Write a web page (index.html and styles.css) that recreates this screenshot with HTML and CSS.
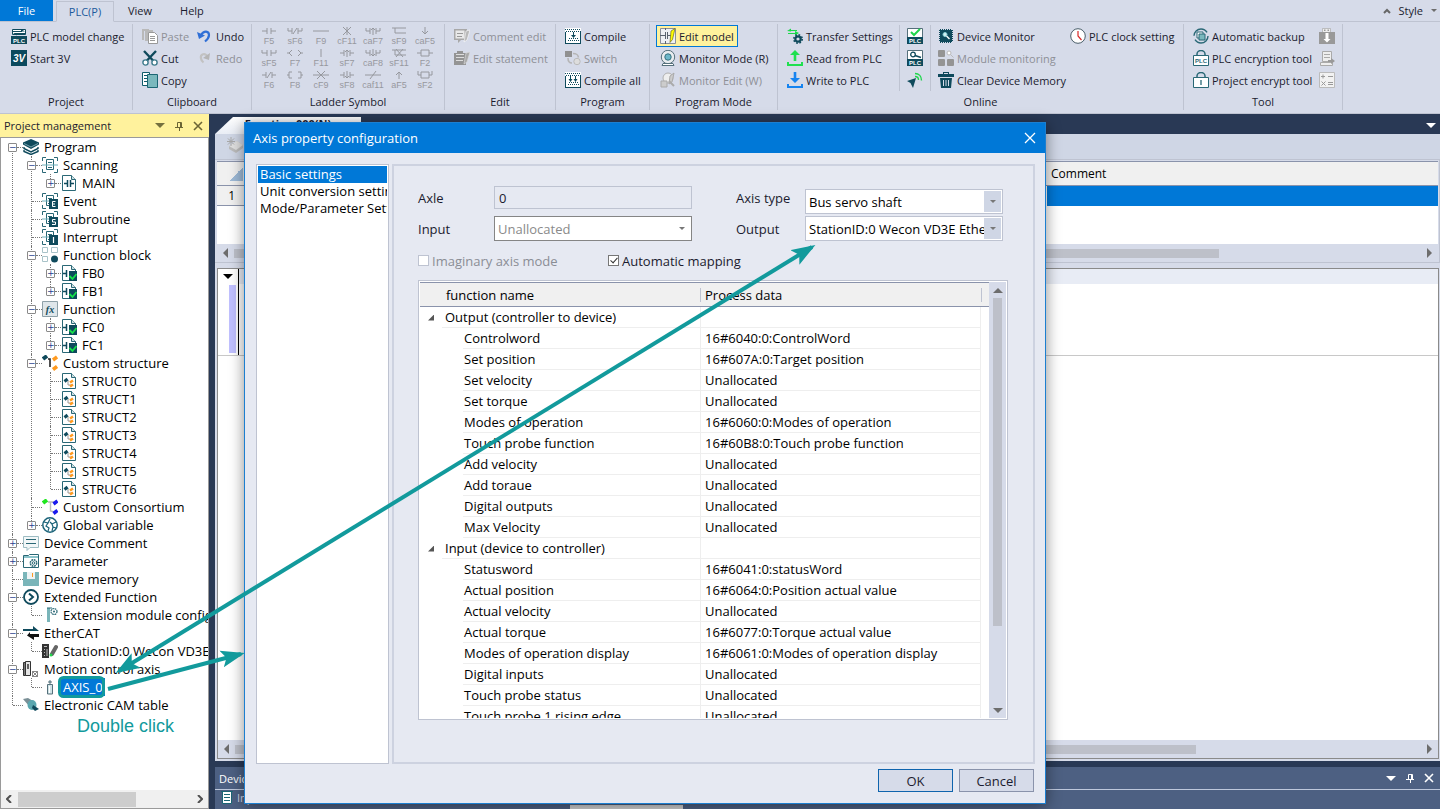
FILE: index.html
```html
<!DOCTYPE html>
<html lang="en">
<head>
    <meta charset="UTF-8">
    <meta name="viewport" content="width=device-width, initial-scale=1.0">
    <title>Axis property configuration</title>
    <link rel="stylesheet" href="styles.css">
</head>
<body>
    <svg class="sprite" aria-hidden="true">
        <!-- ribbon -->
        <symbol id="i-model" viewBox="0 0 16 16"><path fill="#fff" stroke="#0f4a5c" d="M1.500 1.500h13v5h-13z"/><path stroke="#0f4a5c" d="M1 3.500h10M5 5.500h10" /><path fill="#0f4a5c" d="M10 1l4 2.500h-4zM6 7.500L2 5h4zM0 8h16v8H0z"/><text x="8" y="14.500" class="svg-plc">PLC</text></symbol>
        <symbol id="i-3v" viewBox="0 0 16 16"><rect width="16" height="16" fill="#0b4a5e"/><text x="8" y="12" class="svg-3v">3V</text></symbol>
        <symbol id="i-paste" viewBox="0 0 16 16"><path fill="#b9b9b9" d="M0 1h7v2H2v9H0zM3 2h8v2H6v9H3z"/><path fill="#fff" stroke="#999" d="M6.500 4.500h6l3 3v8h-9z"/><path stroke="#999" d="M8 8.500h5M8 10.500h5M8 12.500h5"/></symbol>
        <symbol id="i-cut" viewBox="0 0 16 16"><path stroke="#0f4a5c" stroke-width="2.400" d="M2 1l9.500 10M14 1L4.500 11"/><g fill="#fff" stroke="#3e7b8c" stroke-width="1.400"><circle cx="3.500" cy="12.500" r="2.600"/><circle cx="12.500" cy="12.500" r="2.600"/></g></symbol>
        <symbol id="i-copy" viewBox="0 0 16 16"><path fill="#fff" stroke="#0f5c6b" d="M.5 .5h7v13h-7z"/><path stroke="#0f5c6b" d="M2 3.500h4M2 6.500h4M2 9.500h4"/><path fill="#7ab8bd" stroke="#1b6674" d="M5.500 2.500h10v13h-10z"/></symbol>
        <symbol id="i-undo" viewBox="0 0 16 16"><path fill="none" stroke="#2f6fd6" stroke-width="2.200" d="M4 7c3-5 8-4 8 0 0 2.500-1.500 4.500-4 6.500"/><path fill="#2f6fd6" d="M0 4l2 7 6-3.500z"/></symbol>
        <symbol id="i-redo" viewBox="0 0 16 16"><path fill="none" stroke="#c2c2c2" stroke-width="2.200" d="M11 7C8 2 3 4 4 8.500c.3 2 1.200 3 2.500 4"/><path fill="#b5b5b5" d="M13 3l-1 7-6-2z"/></symbol>
        <symbol id="i-comment" viewBox="0 0 16 16"><path fill="#a8a8a8" d="M0 1h13v11H7l-3 3v-3H0z"/><path fill="#e9e9e9" d="M1.500 2.500h9v8h-9z"/><path stroke="#999" d="M3 5.500h6M3 8.500h5"/><path fill="#b9b9b9" stroke="#fff" stroke-width=".6" d="M12 3l4-1-3 10-3 2z"/></symbol>
        <symbol id="i-statement" viewBox="0 0 16 16"><path fill="#949494" d="M0 3h3V1h6v2h3v12H0z"/><path stroke="#ddd" d="M2 7.500h8M2 10.500h7M2 4.500h8"/><path fill="#a9a9a9" stroke="#ddd" stroke-width=".6" d="M12 3l4-1-3 10-3 2z"/></symbol>
        <symbol id="i-compile" viewBox="0 0 16 16"><path fill="#fff" d="M0 0h16v16H0z"/><path stroke="#0f4a5c" stroke-dasharray="1 1" d="M0 1.500h16M1 3.500h15M3 12.500h11M4 10.500h9"/><path stroke="#0f4a5c" d="M.5 4v12M15.500 4v12M0 15.500h16M8.500 4v5"/><path fill="#0f4a5c" d="M6 7h5l-2.500 3z"/></symbol>
        <symbol id="i-compile-all" viewBox="0 0 16 16"><path fill="#fff" d="M0 0h16v16H0z"/><path stroke="#0f4a5c" stroke-dasharray="1 1" d="M0 1.500h16M1 3.500h15M3 12.500h11M4 10.500h9"/><path stroke="#0f4a5c" d="M.5 4v12M15.500 4v12M0 15.500h16M5.500 4v5M10.500 4v5"/><path fill="#0f4a5c" d="M3.500 7h4l-2 3zM8.500 7h4l-2 3z"/></symbol>
        <symbol id="i-switch" viewBox="0 0 16 16"><path fill="#909090" d="M0 1h7v6H0z"/><circle cx="12" cy="11.500" r="3.200" fill="#ddd" stroke="#bbb"/><path fill="none" stroke="#b5b5b5" stroke-width="1.600" d="M8 3.500c4 0 5 1 5.500 4M3 8c0 3 1 5 4 5"/></symbol>
        <symbol id="i-edit-model" viewBox="0 0 16 16"><path fill="#eef0f4" stroke="#8a8f99" d="M.5 .5h15v15H.5z"/><path stroke="#59636e" d="M0 7.500h5M8 7.500h4M5.500 4v7M7.500 4v7M5.500 0v2M5.500 13v3"/><path fill="#ff0" stroke="#6d6a20" stroke-width=".7" d="M11 3l4-2.500-2.500 11L10 14.500z"/></symbol>
        <symbol id="i-monitor" viewBox="0 0 16 16"><circle cx="8" cy="7" r="6.700" fill="#e8ecef" stroke="#55707b"/><circle cx="8" cy="7" r="3.200" fill="#6cb7c9" stroke="#36717f"/><path fill="#fff" stroke="#55707b" d="M3 13.500h10l1 2H2z"/></symbol>
        <symbol id="i-monitor-edit" viewBox="0 0 16 16"><circle cx="8" cy="6" r="5" fill="#eee" stroke="#b0b0b0"/><path fill="#ccc" stroke="#aaa" d="M1 9h6v6H1zM10 4l4-3-2 9-3 2z"/><path stroke="#aaa" stroke-width="2" d="M9 9l5 5"/></symbol>
        <symbol id="i-transfer" viewBox="0 0 16 16"><path fill="#1bd94b" d="M0 3l4-2.500V2h6v1H4v.5zM12 5l-4 2.500V6H1V5h7V3z"/><circle cx="11" cy="11" r="2.700" fill="none" stroke="#0f4a5c" stroke-width="2.200"/><circle cx="11" cy="11" r="4.200" fill="none" stroke="#0f4a5c" stroke-width="1.600" stroke-dasharray="1.700 1.600"/></symbol>
        <symbol id="i-read" viewBox="0 0 16 16"><path fill="#1fe04f" d="M8 0l5 5H9.300v6H6.700V5H3z"/><path fill="none" stroke="#1fe04f" stroke-width="2" d="M1 12v3h14v-3"/></symbol>
        <symbol id="i-write" viewBox="0 0 16 16"><path fill="#1583f0" d="M6.700 0h2.600v6H13l-5 5-5-5h3.700z"/><path fill="none" stroke="#1583f0" stroke-width="2" d="M1 12v3h14v-3"/></symbol>
        <symbol id="i-plc-check" viewBox="0 0 16 16"><path fill="#fff" stroke="#55707b" d="M.5 .5h15v15H.5z"/><path fill="#0f4a5c" d="M0 9h16v7H0z"/><path fill="none" stroke="#1fd64c" stroke-width="2" d="M4 4l3 3 6-6"/><text x="8" y="15" class="svg-plc">PLC</text></symbol>
        <symbol id="i-plc-key" viewBox="0 0 16 16"><path fill="#fff" stroke="#55707b" d="M.5 .5h15v15H.5z"/><path fill="#0f4a5c" d="M0 9h16v7H0z"/><circle cx="6" cy="4.500" r="2.300" fill="none" stroke="#0f4a5c" stroke-width="1.300"/><path stroke="#0f4a5c" stroke-width="1.400" d="M8 5.500l6 2"/><text x="8" y="15" class="svg-plc">PLC</text></symbol>
        <symbol id="i-signal" viewBox="0 0 16 16"><path fill="#0f4a5c" d="M0 9l9-3-3 10-2.500-5z"/><path fill="none" stroke="#1fd64c" stroke-width="1.400" d="M8 4.500c2 0 3.500 1.500 3.500 3.500M8 1.500c4 0 6.500 3 6.500 7"/></symbol>
        <symbol id="i-chip" viewBox="0 0 16 16"><path stroke="#0f4a5c" stroke-width="14" stroke-dasharray="1 1" d="M2 8h12"/><path stroke="#0f4a5c" stroke-width="14" stroke-dasharray="1 1" d="M8 2v12"/><path fill="#0f4a5c" d="M2 2h12v12H2z"/><circle cx="7" cy="6.500" r="2" fill="#d6f0f2" stroke="#8ad0d6"/><path stroke="#fff" stroke-width="1.400" d="M8.500 8l3 3"/></symbol>
        <symbol id="i-module" viewBox="0 0 16 16"><g fill="#949494"><rect width="7" height="7" rx="1"/><rect y="9" width="7" height="7" rx="1"/><rect x="9" y="9" width="7" height="7" rx="1"/></g><circle cx="11" cy="3" r="2" fill="#fff" stroke="#b8b8b8"/><path stroke="#bbb" d="M12.500 4.500l3 3"/></symbol>
        <symbol id="i-trash" viewBox="0 0 16 16"><path fill="#0f4a5c" d="M5 0h6v2h5v3H0V2h5zM2 6h12l-1 10H3z"/><path stroke="#d6dbe9" d="M5.500 8v6M8 8v6M10.500 8v6M6 1.500h4"/></symbol>
        <symbol id="i-clock" viewBox="0 0 16 16"><circle cx="8" cy="8" r="7.300" fill="#fff" stroke="#4a5e6a"/><path stroke="#d92a2a" stroke-width="1.200" d="M8 3v5l3.500 4"/></symbol>
        <symbol id="i-backup" viewBox="0 0 16 16"><circle cx="8" cy="8" r="7" fill="none" stroke="#2a6876" stroke-width="1.400" stroke-dasharray="18 4"/><path fill="#fff" stroke="#2a6876" d="M4 4h6v6H4z"/><path fill="#7ab8bd" stroke="#2a6876" d="M6 6h6v6H6z"/></symbol>
        <symbol id="i-lock-plc" viewBox="0 0 16 16"><path fill="none" stroke="#2a6876" stroke-width="1.500" d="M4 6V4a4 3.500 0 0 1 8 0v2"/><path fill="#fff" stroke="#2a6876" d="M.5 5.500h15v10H.5z"/><text x="8" y="13" class="svg-plc svg-plc-dark">PLC</text></symbol>
        <symbol id="i-lock" viewBox="0 0 16 16"><path fill="none" stroke="#2a6876" stroke-width="1.500" d="M4 6V4a4 3.500 0 0 1 8 0v2"/><path fill="#fff" stroke="#2a6876" d="M.5 5.500h15v10H.5z"/><path stroke="#2a6876" stroke-width="1.300" d="M8 8v5"/></symbol>
        <symbol id="i-usb" viewBox="0 0 16 16"><path fill="#eee" stroke="#aaa" stroke-width=".7" d="M3.500 .5h8v4h-8z"/><path fill="#999" d="M5 1.500h1.500V3H5zM8.500 1.500H10V3H8.500zM0 4h16v12H0z"/><path fill="#fff" d="M6.500 5h3v6h2L8 14.500 4.500 11h2z"/></symbol>
        <symbol id="i-export" viewBox="0 0 16 16"><path fill="#eee" stroke="#aaa" d="M3.500 1.500h9v10h-9zM1.500 12.500h12v3h-12z"/><path stroke="#aaa" d="M5 4.500h6M5 7.500h6"/><path fill="#999" d="M9 10h3V8l4 3-4 3v-2H9z"/></symbol>
        <symbol id="i-calc" viewBox="0 0 16 16"><path fill="#f2f2f2" stroke="#bbb" d="M.5 .5h15v15H.5z"/><path stroke="#999" d="M2 4.500h4M4 2.500v4M9 4.500h5M2.500 9.500l4 4M6.500 9.500l-4 4M9 10.500h5M9 12.500h5"/></symbol>

        <!-- ladder contacts -->
        <symbol id="l-no" viewBox="0 0 16 8"><path d="M1 4h5M10 4h5M6 1v6M10 1v6"/></symbol>
        <symbol id="l-or" viewBox="0 0 16 8"><path d="M1 1v3h5M10 4h5V1M6 1v6M10 1v6"/></symbol>
        <symbol id="l-nc" viewBox="0 0 16 8"><path d="M1 4h4M11 4h4M5 1v6M11 1v6M6 7l4-6"/></symbol>
        <symbol id="l-ornc" viewBox="0 0 16 8"><path d="M1 1v3h4M11 4h4V1M5 1v6M11 1v6M6 7l4-6"/></symbol>
        <symbol id="l-line" viewBox="0 0 16 8"><path d="M0 4h16"/></symbol>
        <symbol id="l-x" viewBox="0 0 16 8"><path d="M8 0v8M4 0l8 8M12 0L4 8"/></symbol>
        <symbol id="l-xline" viewBox="0 0 16 8"><path d="M0 4h16M4 0l8 8M12 0L4 8"/></symbol>
        <symbol id="l-up" viewBox="0 0 16 8"><path d="M1 4h4M11 4h4M5 1v6M11 1v6M8 1v7M6 3l2-2 2 2"/></symbol>
        <symbol id="l-down" viewBox="0 0 16 8"><path d="M1 4h4M11 4h4M5 1v6M11 1v6M8 0v7M6 5l2 2 2-2"/></symbol>
        <symbol id="l-orup" viewBox="0 0 16 8"><path d="M1 1v3h4M11 4h4V1M5 1v6M11 1v6M8 1v7M6 3l2-2 2 2"/></symbol>
        <symbol id="l-ordown" viewBox="0 0 16 8"><path d="M1 1v3h4M11 4h4V1M5 1v6M11 1v6M8 0v7M6 5l2 2 2-2"/></symbol>
        <symbol id="l-branch" viewBox="0 0 16 8"><path d="M1 1h14M4 1v5h11"/></symbol>
        <symbol id="l-xbranch" viewBox="0 0 16 8"><path d="M1 1h14M4 1v5h11M5 0l7 8M12 0L5 8"/></symbol>
        <symbol id="l-arrd" viewBox="0 0 16 8"><path d="M8 0v7M5 4l3 3 3-3"/></symbol>
        <symbol id="l-arru" viewBox="0 0 16 8"><path d="M8 1v7M5 4l3-3 3 3"/></symbol>
        <symbol id="l-coil" viewBox="0 0 16 8"><path d="M0 4h2M5 1L2 4l3 3M11 1l3 3-3 3M14 4h2"/></symbol>
        <symbol id="l-app" viewBox="0 0 16 8"><path d="M0 4h2M5 1H2v6h3M11 1h3v6h-3M14 4h2"/></symbol>
        <symbol id="l-vert" viewBox="0 0 16 8"><path d="M8 0v8"/></symbol>
        <symbol id="l-slash" viewBox="0 0 16 8"><path d="M0 4h16M5 8l6-8"/></symbol>
        <symbol id="l-box" viewBox="0 0 16 8"><path d="M0 4h4V1h8v6H4V4M12 4h4"/></symbol>
        <symbol id="l-orbox" viewBox="0 0 16 8"><path d="M1 0v4h3V1h8v6H4V4M12 4h3V0"/></symbol>

        <!-- project tree -->
        <symbol id="t-program" viewBox="0 0 16 16"><path fill="#fff" stroke="#0f4a5c" stroke-width="1.400" d="M1 11v1.500l7 3 7-3V11M1 8v1.500l7 3.500 7-3.500V8"/><path fill="#0f4a5c" d="M8 0l8 3.500v2L8 10 0 5.500v-2z"/><path fill="none" stroke="#8fb9c2" stroke-width=".8" d="M1 4.500l7 3.500 7-3.500"/></symbol>
        <symbol id="t-scan" viewBox="0 0 16 16"><path fill="none" stroke="#2a6876" d="M.5 4V.5H4M12 .5h3.500V4M.5 12v3.500H4M12 15.500h3.500V12M4.500 2.500h7v10h-7zM6 5.500h4M6 10.500h4"/><path stroke="#6fb0bb" d="M0 8h16"/></symbol>
        <symbol id="t-scan-e" viewBox="0 0 16 16"><use href="#t-scan"/><path fill="#0f4a5c" d="M7 6h9v10H7z"/><path fill="none" stroke="#fff" d="M13.500 8.500h-3v5h3M10 11h3"/></symbol>
        <symbol id="t-scan-s" viewBox="0 0 16 16"><use href="#t-scan"/><path fill="#0f4a5c" d="M7 6h9v10H7z"/><path fill="none" stroke="#fff" d="M13.500 8.500h-3V11h3v2.500h-3.500"/></symbol>
        <symbol id="t-scan-i" viewBox="0 0 16 16"><use href="#t-scan"/><path fill="#0f4a5c" d="M7 6h9v10H7z"/><path stroke="#fff" stroke-width="1.200" d="M11.500 8v6"/></symbol>
        <symbol id="t-page" viewBox="0 0 16 16"><path fill="#fff" stroke="#2a6876" d="M1.500 .5h9l4 4v11h-13z"/><path fill="#cfdfe3" stroke="#2a6876" d="M10.500 .5v4h4"/></symbol>
        <symbol id="t-main" viewBox="0 0 16 16"><use href="#t-page"/><path stroke="#0f4a5c" stroke-width="1.500" d="M3 8.500h3M10 8.500h3M6.500 5v7M9.500 5v7"/></symbol>
        <symbol id="t-fb" viewBox="0 0 16 16"><use href="#t-page"/><path stroke="#0f4a5c" stroke-width="1.500" d="M2 8.500h3M5.500 5v7"/><path fill="#0f4a5c" d="M8 6h8v10H8z"/><path fill="none" stroke="#16e04a" stroke-width="1.800" d="M8.500 11l3 3 4-5"/></symbol>
        <symbol id="t-blocks" viewBox="0 0 16 16"><path fill="#fff" stroke="#a9c3c9" d="M.5 .5h5v5h-5zM9.500 .5h6v5h-6zM.5 9.500h5v5h-5z"/><circle cx="12.500" cy="12" r="3.500" fill="#0f4a5c"/></symbol>
        <symbol id="t-fx" viewBox="0 0 16 16"><path fill="#dfe6ea" stroke="#8ea0a8" d="M.5 .5h15v15H.5z"/><text x="8" y="11.500" class="svg-fx">fx</text></symbol>
        <symbol id="t-struct" viewBox="0 0 16 16"><path fill="none" stroke="#222" stroke-width="1.600" d="M6 4h2v8"/><path stroke="#0f4a5c" stroke-width="4" d="M1 4l4-3"/><path stroke="#ff9a1f" stroke-width="3.500" d="M11 5l4-3M11 14.500l4-3"/></symbol>
        <symbol id="t-consort" viewBox="0 0 16 16"><path fill="none" stroke="#bbb" stroke-width="1.400" d="M6 3h6M8.500 3v9l4 1"/><path stroke="#1fe61f" stroke-width="4" d="M1 4l4-3"/><path stroke="#1a1aee" stroke-width="3.500" d="M11.500 5l4-3M11.500 14.500l4-3"/></symbol>
        <symbol id="t-item" viewBox="0 0 16 16"><use href="#t-page"/><path fill="none" stroke="#999" d="M7 7v5h4"/><path stroke="#0f4a5c" stroke-width="3" d="M3.500 8.500l3-2.500"/><path stroke="#ff9a1f" stroke-width="2.500" d="M9 9.500l3-2M9 13.500l3-2"/></symbol>
        <symbol id="t-globe" viewBox="0 0 16 16"><circle cx="8" cy="8" r="7.200" fill="#fff" stroke="#1b6379" stroke-width="1.500"/><path fill="none" stroke="#1b6379" stroke-width="1.200" d="M2 5l4 1 2-4M6 6l-2 3 3 2-1 3M14 5l-4 2 1 3 3 1M10 7L8 5M11 10l-1 4"/></symbol>
        <symbol id="t-comment" viewBox="0 0 16 16"><path fill="#f2f7f8" stroke="#9dbcc3" d="M.5 1.500h15v11H7l-3 3v-3H.5z"/><path stroke="#2a6876" d="M3 4.500h10M3 8.500h10"/></symbol>
        <symbol id="t-param" viewBox="0 0 16 16"><path fill="#fff" stroke="#2a6876" d="M.5 2.500h5l1-1h9v13H.5z"/><path fill="#8cc3ca" d="M1 3h14v2H1z"/><circle cx="10.500" cy="10" r="3.200" fill="#fff" stroke="#2a6876" stroke-width="1.500" stroke-dasharray="1.800 .7"/><circle cx="10.500" cy="10" r="1.300" fill="none" stroke="#2a6876"/></symbol>
        <symbol id="t-memory" viewBox="0 0 16 16"><path fill="#7ab5b9" d="M0 1h4v7h8V1h4v14H0z"/><path fill="#eef3f4" d="M4 1h8v7H4z"/><path stroke="#ff9a1f" d="M9.500 2v4"/></symbol>
        <symbol id="t-ext" viewBox="0 0 16 16"><circle cx="8" cy="8" r="7" fill="#fff" stroke="#0f4a5c" stroke-width="1.800"/><path fill="none" stroke="#0f4a5c" stroke-width="2" d="M6 4.500L10 8l-4 3.500"/></symbol>
        <symbol id="t-flag" viewBox="0 0 16 16"><path fill="#7ab5b9" d="M5 1h3v14H5z"/><path stroke="#2a6876" d="M5 1h5"/><circle cx="12" cy="4.500" r="3" fill="#fff" stroke="#2a6876" stroke-width="1.200" stroke-dasharray="1.800 .6"/><circle cx="12" cy="4.500" r="1" fill="#2a6876"/></symbol>
        <symbol id="t-ecat" viewBox="0 0 16 16"><path fill="#0f4a5c" d="M0 4h10V1l6 5H0z"/><path fill="#111" d="M16 9H7V7L4 10.500 11 15v-3h5z"/></symbol>
        <symbol id="t-servo" viewBox="0 0 16 16"><path fill="#333" d="M0 1h7v14H0z"/><path stroke="#bbb" d="M2 3.500h3M2 6.500h1M2 9.500h1M2 12.500h1M5 6v7"/><path stroke="#666" stroke-width="4" stroke-linecap="round" d="M10 11l4-7"/><circle cx="9" cy="12" r="1.500" fill="#1fd64c"/></symbol>
        <symbol id="t-motion" viewBox="0 0 16 16"><path fill="#777" stroke="#333" d="M.5 1.500h2v13h-2z"/><path fill="#e5e5e5" stroke="#333" d="M2.500 .5h5v14h-5z"/><path stroke="#333" stroke-width="1.500" d="M5 3v5"/><path fill="none" stroke="#888" d="M9.500 10.500h5v5h-5zM9 10l6 6M15 10l-6 6"/></symbol>
        <symbol id="t-axis" viewBox="0 0 16 16"><path fill="#cfe3e6" stroke="#55707b" d="M5.500 5.500h5v9.500h-5zM7 2h2v2H7z"/><path stroke="#fff" d="M7.500 7v7"/></symbol>
        <symbol id="t-cam" viewBox="0 0 16 16"><path fill="#7a8f96" d="M0 2l5-1 5 3-4 5z"/><ellipse cx="9" cy="8" rx="4.500" ry="5" fill="#5aa7b0"/><path fill="#0f4a5c" d="M10 8l6 4-4 2-3-3z"/></symbol>
        <symbol id="t-pin" viewBox="0 0 10 10"><path fill="none" stroke="currentColor" d="M3.500 6V1.500h4V6M1 6.500h8M5.500 7v3M6.500 2v4"/></symbol>
        <symbol id="t-close" viewBox="0 0 10 10"><path stroke="currentColor" stroke-width="1.600" d="M1 1l8 8M9 1L1 9"/></symbol>
    </svg>

    <header class="menu">
        <button class="menu-tab file">File</button>
        <button class="menu-tab active">PLC(P)</button>
        <button class="menu-tab">View</button>
        <button class="menu-tab">Help</button>
        <div class="menu-style">
            <svg class="caret-up" viewBox="0 0 8 6"><path fill="none" stroke="#666" stroke-width="2" d="M1 5l3-3 3 3"/></svg>
            <button class="menu-tab style">Style</button>
            <i class="arrow down small"></i>
        </div>
    </header>

    <nav class="ribbon">
        <section class="group project">
            <div class="cols">
                <div class="col">
                    <button class="cmd"><svg class="icon"><use href="#i-model"/></svg>PLC model change</button>
                    <button class="cmd"><svg class="icon"><use href="#i-3v"/></svg>Start 3V</button>
                </div>
            </div>
            <h2>Project</h2>
        </section>
        <section class="group clipboard">
            <div class="cols">
                <div class="col">
                    <button class="cmd" disabled><svg class="icon"><use href="#i-paste"/></svg>Paste</button>
                    <button class="cmd"><svg class="icon"><use href="#i-cut"/></svg>Cut</button>
                    <button class="cmd"><svg class="icon"><use href="#i-copy"/></svg>Copy</button>
                </div>
                <div class="col">
                    <button class="cmd"><svg class="icon"><use href="#i-undo"/></svg>Undo</button>
                    <button class="cmd" disabled><svg class="icon"><use href="#i-redo"/></svg>Redo</button>
                </div>
            </div>
            <h2>Clipboard</h2>
        </section>
        <section class="group ladder">
            <div class="ladder-grid">
                <button disabled><svg><use href="#l-no"/></svg>F5</button>
                <button disabled><svg><use href="#l-ornc"/></svg>sF6</button>
                <button disabled><svg><use href="#l-line"/></svg>F9</button>
                <button disabled><svg><use href="#l-x"/></svg>cF11</button>
                <button disabled><svg><use href="#l-orup"/></svg>caF7</button>
                <button disabled><svg><use href="#l-branch"/></svg>sF9</button>
                <button disabled><svg><use href="#l-arrd"/></svg>caF5</button>
                <button disabled><svg><use href="#l-or"/></svg>sF5</button>
                <button disabled><svg><use href="#l-coil"/></svg>F7</button>
                <button disabled><svg><use href="#l-vert"/></svg>F11</button>
                <button disabled><svg><use href="#l-up"/></svg>sF7</button>
                <button disabled><svg><use href="#l-ordown"/></svg>caF8</button>
                <button disabled><svg><use href="#l-xbranch"/></svg>sF11</button>
                <button disabled><svg><use href="#l-box"/></svg>F2</button>
                <button disabled><svg><use href="#l-nc"/></svg>F6</button>
                <button disabled><svg><use href="#l-app"/></svg>F8</button>
                <button disabled><svg><use href="#l-xline"/></svg>cF9</button>
                <button disabled><svg><use href="#l-down"/></svg>sF8</button>
                <button disabled><svg><use href="#l-slash"/></svg>caf11</button>
                <button disabled><svg><use href="#l-arru"/></svg>aF5</button>
                <button disabled><svg><use href="#l-orbox"/></svg>sF2</button>
            </div>
            <h2>Ladder Symbol</h2>
        </section>
        <section class="group edit">
            <div class="cols">
                <div class="col">
                    <button class="cmd" disabled><svg class="icon"><use href="#i-comment"/></svg>Comment edit</button>
                    <button class="cmd" disabled><svg class="icon"><use href="#i-statement"/></svg>Edit statement</button>
                </div>
            </div>
            <h2>Edit</h2>
        </section>
        <section class="group program">
            <div class="cols">
                <div class="col">
                    <button class="cmd"><svg class="icon"><use href="#i-compile"/></svg>Compile</button>
                    <button class="cmd" disabled><svg class="icon"><use href="#i-switch"/></svg>Switch</button>
                    <button class="cmd"><svg class="icon"><use href="#i-compile-all"/></svg>Compile all</button>
                </div>
            </div>
            <h2>Program</h2>
        </section>
        <section class="group mode">
            <div class="cols">
                <div class="col">
                    <button class="cmd selected"><svg class="icon"><use href="#i-edit-model"/></svg>Edit model</button>
                    <button class="cmd"><svg class="icon"><use href="#i-monitor"/></svg>Monitor Mode (R)</button>
                    <button class="cmd" disabled><svg class="icon"><use href="#i-monitor-edit"/></svg>Monitor Edit (W)</button>
                </div>
            </div>
            <h2>Program Mode</h2>
        </section>
        <section class="group online">
            <div class="cols">
                <div class="col transfer">
                    <button class="cmd"><svg class="icon"><use href="#i-transfer"/></svg>Transfer Settings</button>
                    <button class="cmd"><svg class="icon"><use href="#i-read"/></svg>Read from PLC</button>
                    <button class="cmd"><svg class="icon"><use href="#i-write"/></svg>Write to PLC</button>
                </div>
                <div class="col only-icons">
                    <button class="cmd" aria-label="Verify"><svg class="icon"><use href="#i-plc-check"/></svg></button>
                    <button class="cmd" aria-label="Password"><svg class="icon"><use href="#i-plc-key"/></svg></button>
                    <button class="cmd" aria-label="Remote"><svg class="icon"><use href="#i-signal"/></svg></button>
                </div>
                <div class="col device">
                    <button class="cmd"><svg class="icon"><use href="#i-chip"/></svg>Device Monitor</button>
                    <button class="cmd" disabled><svg class="icon"><use href="#i-module"/></svg>Module monitoring</button>
                    <button class="cmd"><svg class="icon"><use href="#i-trash"/></svg>Clear Device Memory</button>
                </div>
                <div class="col">
                    <button class="cmd"><svg class="icon"><use href="#i-clock"/></svg>PLC clock setting</button>
                </div>
            </div>
            <h2>Online</h2>
        </section>
        <section class="group tool">
            <div class="cols">
                <div class="col backup">
                    <button class="cmd"><svg class="icon"><use href="#i-backup"/></svg>Automatic backup</button>
                    <button class="cmd"><svg class="icon"><use href="#i-lock-plc"/></svg>PLC encryption tool</button>
                    <button class="cmd"><svg class="icon"><use href="#i-lock"/></svg>Project encrypt tool</button>
                </div>
                <div class="col">
                    <button class="cmd" disabled aria-label="USB download"><svg class="icon"><use href="#i-usb"/></svg></button>
                    <button class="cmd" disabled aria-label="Export"><svg class="icon"><use href="#i-export"/></svg></button>
                    <button class="cmd" disabled aria-label="Calculator"><svg class="icon"><use href="#i-calc"/></svg></button>
                </div>
            </div>
            <h2>Tool</h2>
        </section>
    </nav>

    <div class="workspace">
        <aside class="panel">
            <div class="panel-title">
                <span>Project management</span>
                <i class="arrow down"></i>
                <svg class="mini"><use href="#t-pin"/></svg>
                <svg class="mini"><use href="#t-close"/></svg>
            </div>
            <ul class="tree">
                <li>
                    <div class="node"><span class="joint"><button class="toggle">−</button></span><svg class="icon"><use href="#t-program"/></svg><span>Program</span></div>
                    <ul>
                        <li>
                            <div class="node"><span class="joint"><button class="toggle">−</button></span><svg class="icon"><use href="#t-scan"/></svg><span>Scanning</span></div>
                            <ul>
                                <li><div class="node"><span class="joint"><button class="toggle">+</button></span><svg class="icon"><use href="#t-main"/></svg><span>MAIN</span></div></li>
                            </ul>
                        </li>
                        <li><div class="node"><span class="joint leaf"></span><svg class="icon"><use href="#t-scan-e"/></svg><span>Event</span></div></li>
                        <li><div class="node"><span class="joint leaf"></span><svg class="icon"><use href="#t-scan-s"/></svg><span>Subroutine</span></div></li>
                        <li><div class="node"><span class="joint leaf"></span><svg class="icon"><use href="#t-scan-i"/></svg><span>Interrupt</span></div></li>
                        <li>
                            <div class="node"><span class="joint"><button class="toggle">−</button></span><svg class="icon"><use href="#t-blocks"/></svg><span>Function block</span></div>
                            <ul>
                                <li><div class="node"><span class="joint"><button class="toggle">+</button></span><svg class="icon"><use href="#t-fb"/></svg><span>FB0</span></div></li>
                                <li><div class="node"><span class="joint"><button class="toggle">+</button></span><svg class="icon"><use href="#t-fb"/></svg><span>FB1</span></div></li>
                            </ul>
                        </li>
                        <li>
                            <div class="node"><span class="joint"><button class="toggle">−</button></span><svg class="icon"><use href="#t-fx"/></svg><span>Function</span></div>
                            <ul>
                                <li><div class="node"><span class="joint"><button class="toggle">+</button></span><svg class="icon"><use href="#t-fb"/></svg><span>FC0</span></div></li>
                                <li><div class="node"><span class="joint"><button class="toggle">+</button></span><svg class="icon"><use href="#t-fb"/></svg><span>FC1</span></div></li>
                            </ul>
                        </li>
                        <li>
                            <div class="node"><span class="joint"><button class="toggle">−</button></span><svg class="icon"><use href="#t-struct"/></svg><span>Custom structure</span></div>
                            <ul>
                                <li><div class="node"><span class="joint leaf"></span><svg class="icon"><use href="#t-item"/></svg><span>STRUCT0</span></div></li>
                                <li><div class="node"><span class="joint leaf"></span><svg class="icon"><use href="#t-item"/></svg><span>STRUCT1</span></div></li>
                                <li><div class="node"><span class="joint leaf"></span><svg class="icon"><use href="#t-item"/></svg><span>STRUCT2</span></div></li>
                                <li><div class="node"><span class="joint leaf"></span><svg class="icon"><use href="#t-item"/></svg><span>STRUCT3</span></div></li>
                                <li><div class="node"><span class="joint leaf"></span><svg class="icon"><use href="#t-item"/></svg><span>STRUCT4</span></div></li>
                                <li><div class="node"><span class="joint leaf"></span><svg class="icon"><use href="#t-item"/></svg><span>STRUCT5</span></div></li>
                                <li><div class="node"><span class="joint leaf"></span><svg class="icon"><use href="#t-item"/></svg><span>STRUCT6</span></div></li>
                            </ul>
                        </li>
                        <li><div class="node"><span class="joint leaf"></span><svg class="icon"><use href="#t-consort"/></svg><span>Custom Consortium</span></div></li>
                        <li><div class="node"><span class="joint"><button class="toggle">+</button></span><svg class="icon"><use href="#t-globe"/></svg><span>Global variable</span></div></li>
                    </ul>
                </li>
                <li><div class="node"><span class="joint"><button class="toggle">+</button></span><svg class="icon"><use href="#t-comment"/></svg><span>Device Comment</span></div></li>
                <li><div class="node"><span class="joint"><button class="toggle">+</button></span><svg class="icon"><use href="#t-param"/></svg><span>Parameter</span></div></li>
                <li><div class="node"><span class="joint leaf"></span><svg class="icon"><use href="#t-memory"/></svg><span>Device memory</span></div></li>
                <li>
                    <div class="node"><span class="joint"><button class="toggle">−</button></span><svg class="icon"><use href="#t-ext"/></svg><span>Extended Function</span></div>
                    <ul>
                        <li><div class="node"><span class="joint leaf"></span><svg class="icon"><use href="#t-flag"/></svg><span>Extension module configuration</span></div></li>
                    </ul>
                </li>
                <li>
                    <div class="node"><span class="joint"><button class="toggle">−</button></span><svg class="icon"><use href="#t-ecat"/></svg><span>EtherCAT</span></div>
                    <ul>
                        <li><div class="node"><span class="joint leaf"></span><svg class="icon"><use href="#t-servo"/></svg><span>StationID:0 Wecon VD3E</span></div></li>
                    </ul>
                </li>
                <li>
                    <div class="node"><span class="joint"><button class="toggle">−</button></span><svg class="icon"><use href="#t-motion"/></svg><span>Motion control axis</span></div>
                    <ul>
                        <li><div class="node"><span class="joint leaf"></span><svg class="icon"><use href="#t-axis"/></svg><span class="picked">AXIS_0</span></div></li>
                    </ul>
                </li>
                <li><div class="node"><span class="joint leaf"></span><svg class="icon"><use href="#t-cam"/></svg><span>Electronic CAM table</span></div></li>
            </ul>
            <div class="panel-scroll">
                <svg class="chev" viewBox="0 0 6 8"><path d="M5 0L1 4l4 4"/></svg>
                <div class="rail"><div class="thumb"></div></div>
                <svg class="chev" viewBox="0 0 6 8"><path d="M1 0l4 4-4 4"/></svg>
            </div>
        </aside>

        <main class="editor">
            <div class="doc-tabs">
                <button class="doc-tab">Function 000(N)</button>
                <i class="arrow down white"></i>
            </div>
            <div class="toolbar">
                <svg class="tool-icon" viewBox="0 0 18 18"><path fill="#bcbcbc" d="M3 10l8-5 6 4v3l-7 5-7-4z"/><path fill="#e0e0e0" d="M3 10l8-5 6 4-7 5z"/><path stroke="#a8a8a8" d="M5 1v9M1 5.500h8M2 2.500l6 6M8 2.500l-6 6"/></svg>
            </div>
            <div class="vars">
                <table class="var-table">
                    <colgroup><col class="c-no"><col class="c-mid"><col></colgroup>
                    <thead>
                        <tr><th class="corner"></th><th></th><th>Comment</th></tr>
                    </thead>
                    <tbody>
                        <tr><th>1</th><td></td><td></td></tr>
                    </tbody>
                </table>
                <div class="vars-blank"></div>
                <div class="hscroll">
                    <i class="arrow left"></i>
                    <div class="rail"><div class="thumb vars-thumb"></div></div>
                    <i class="arrow right"></i>
                </div>
            </div>
            <div class="ladder-view">
                <div class="rung">
                    <div class="gutter"><i class="arrow down black"></i><div class="mark"></div></div>
                    <div class="rung-body"><div class="rung-head"></div></div>
                </div>
                <div class="blank"></div>
                <div class="hscroll">
                    <i class="arrow left"></i>
                    <div class="rail"><div class="thumb ladder-thumb"></div></div>
                    <i class="arrow right"></i>
                </div>
            </div>
            <section class="device-panel">
                <div class="device-title">
                    <span>Device</span>
                    <i class="arrow down white"></i>
                    <svg class="mini"><use href="#t-pin"/></svg>
                    <svg class="mini"><use href="#t-close"/></svg>
                </div>
                <div class="device-body">
                    <svg class="icon" viewBox="0 0 16 16"><path fill="#fff" stroke="#1b6674" d="M3.500 1.500h9v12h-9z"/><path stroke="#1b6674" d="M2 1.500h12M5 4.500h6M5 7.500h6M5 10.500h6"/></svg>
                    <span>Input</span>
                    <div class="device-tab"></div>
                </div>
            </section>
        </main>
    </div>

    <div class="dialog" role="dialog" aria-labelledby="dialog-title">
        <div class="dialog-title">
            <h1 id="dialog-title">Axis property configuration</h1>
            <button class="dialog-close" aria-label="Close"><svg viewBox="0 0 12 12"><path stroke="#fff" stroke-width="1.300" d="M1 1l10 10M11 1L1 11"/></svg></button>
        </div>
        <div class="dialog-main">
            <ul class="pages">
                <li class="current">Basic settings</li>
                <li>Unit conversion settings</li>
                <li>Mode/Parameter Settings</li>
            </ul>
            <div class="page">
                <div class="fields">
                    <div class="fields-left">
                        <label for="axle">Axle</label>
                        <input id="axle" type="text" value="0" readonly>
                        <label for="input">Input</label>
                        <div class="select off"><select id="input" disabled><option>Unallocated</option></select><i class="drop"></i></div>
                    </div>
                    <div class="fields-right">
                        <label for="type" class="raised">Axis type</label>
                        <div class="select"><select id="type"><option>Bus servo shaft</option></select><i class="drop"></i></div>
                        <label for="output">Output</label>
                        <div class="select"><select id="output"><option>StationID:0 Wecon VD3E EtherCAT</option></select><i class="drop"></i></div>
                    </div>
                </div>
                <div class="checks">
                    <label class="check off"><input type="checkbox" disabled>Imaginary axis mode</label>
                    <label class="check"><input type="checkbox" checked>Automatic mapping</label>
                </div>
                <div class="mapping">
                    <div class="mapping-view">
                        <table class="map">
                            <colgroup><col class="c-exp"><col class="c-ind"><col class="c-name"><col><col class="c-end"></colgroup>
                            <thead>
                                <tr><th></th><th colspan="2" class="name">function name</th><th>Process data</th><th></th></tr>
                            </thead>
                            <tbody>
                                <tr class="grp"><td><i class="open"></i></td><td colspan="2">Output (controller to device)</td><td></td></tr>
                                <tr><td></td><td></td><td>Controlword</td><td>16#6040:0:ControlWord</td></tr>
                                <tr><td></td><td></td><td>Set position</td><td>16#607A:0:Target position</td></tr>
                                <tr><td></td><td></td><td>Set velocity</td><td>Unallocated</td></tr>
                                <tr><td></td><td></td><td>Set torque</td><td>Unallocated</td></tr>
                                <tr><td></td><td></td><td>Modes of operation</td><td>16#6060:0:Modes of operation</td></tr>
                                <tr><td></td><td></td><td>Touch probe function</td><td>16#60B8:0:Touch probe function</td></tr>
                                <tr><td></td><td></td><td>Add velocity</td><td>Unallocated</td></tr>
                                <tr><td></td><td></td><td>Add toraue</td><td>Unallocated</td></tr>
                                <tr><td></td><td></td><td>Digital outputs</td><td>Unallocated</td></tr>
                                <tr><td></td><td></td><td>Max Velocity</td><td>Unallocated</td></tr>
                                <tr class="grp"><td><i class="open"></i></td><td colspan="2">Input (device to controller)</td><td></td></tr>
                                <tr><td></td><td></td><td>Statusword</td><td>16#6041:0:statusWord</td></tr>
                                <tr><td></td><td></td><td>Actual position</td><td>16#6064:0:Position actual value</td></tr>
                                <tr><td></td><td></td><td>Actual velocity</td><td>Unallocated</td></tr>
                                <tr><td></td><td></td><td>Actual torque</td><td>16#6077:0:Torque actual value</td></tr>
                                <tr><td></td><td></td><td>Modes of operation display</td><td>16#6061:0:Modes of operation display</td></tr>
                                <tr><td></td><td></td><td>Digital inputs</td><td>Unallocated</td></tr>
                                <tr><td></td><td></td><td>Touch probe status</td><td>Unallocated</td></tr>
                                <tr><td></td><td></td><td>Touch probe 1 rising edge</td><td>Unallocated</td></tr>
                            </tbody>
                        </table>
                    </div>
                    <div class="vscroll">
                        <i class="arrow up"></i>
                        <div class="vrail"><div class="vthumb"></div></div>
                        <i class="arrow down"></i>
                    </div>
                </div>
            </div>
        </div>
        <div class="dialog-footer">
            <button class="btn primary">OK</button>
            <button class="btn">Cancel</button>
        </div>
    </div>

    <!-- walkthrough arrows drawn over the windows -->
    <svg class="notes" width="1440" height="809">
        <defs>
            <marker id="head" viewBox="-24 -9 24 18" refX="-4" refY="0" markerWidth="24" markerHeight="18" markerUnits="userSpaceOnUse" orient="auto-start-reverse">
                <path fill="#129a9c" d="M0 0L-24-8.500-19 0-24 8.500z"/>
            </marker>
        </defs>
        <path class="line" marker-start="url(#head)" marker-end="url(#head)" d="M119 671L812 247"/>
        <path class="line" marker-end="url(#head)" d="M108 689L241 654"/>
        <rect x="59.500" y="677.500" width="44" height="19" rx="4" fill="none" stroke="#129a9c" stroke-width="3"/>
        <text x="77" y="732">Double click</text>
    </svg>
</body>
</html>
```
FILE: styles.css
```css
* {
    margin: 0;
    padding: 0;
    box-sizing: border-box;
}

body {
    display: flex;
    flex-direction: column;
    height: 100vh;
    position: relative;
    overflow: hidden;
    background: #293955;
    color: #1b1b2f;
    font-family: "Open Sans", "Noto Sans", sans-serif;
    font-size: 13px;
}

button,
input,
select {
    font: inherit;
    color: inherit;
}

button {
    background: none;
    border: none;
    white-space: nowrap;
}

ul {
    list-style: none;
}

.sprite {
    display: none;
}

.icon {
    width: 16px;
    height: 16px;
    flex: none;
    fill: none;
}

.svg-plc {
    font: bold 6px "Liberation Sans", sans-serif;
    text-anchor: middle;
    fill: #fff;
}

.svg-plc-dark {
    fill: #2a6876;
}

.svg-3v {
    font: italic bold 10px "Liberation Sans", sans-serif;
    text-anchor: middle;
    fill: #fff;
}

.svg-fx {
    font: italic bold 10px "Liberation Serif", serif;
    text-anchor: middle;
    fill: #0f4a5c;
}

.mini {
    width: 10px;
    height: 10px;
}

/* small triangles */
.arrow {
    flex: none;
    width: 0;
    height: 0;
    border: 4px solid transparent;
    color: #6d6d6d;
}

.arrow.down { border-width: 5px 5px 0; border-top-color: currentColor; }
.arrow.up { border-width: 0 5px 5px; border-bottom-color: currentColor; }
.arrow.left { border-width: 5px 5px 5px 0; border-right-color: currentColor; }
.arrow.right { border-width: 5px 0 5px 5px; border-left-color: currentColor; }
.arrow.small { border-width: 3px 3px 0; }
.arrow.white { color: #fff; }
.arrow.black { color: #000; }

/* menu */
.menu {
    display: flex;
    height: 22px;
    flex: none;
    background: #d6dbe9;
    border-bottom: 1px solid #bec3d1;
}

.menu-tab {
    padding: 0 14px;
    line-height: 21px;
    font-size: 11px;
}

.menu-tab.file {
    width: 53px;
    background: #0078d7;
    color: #fff;
}

.menu-tab.active {
    width: 58px;
    height: 21px;
    margin: 1px 0 0 3px;
    padding: 0;
    line-height: 19px;
    border: 1px solid #bec3d1;
    border-bottom-color: #d6dbe9;
    color: #1c5a9c;
}

.menu-style {
    display: flex;
    align-items: center;
    gap: 8px;
    margin-left: auto;
    padding-right: 3px;
}

.menu-style .menu-tab {
    padding: 0;
}

.caret-up {
    width: 8px;
    height: 6px;
}

/* ribbon */
.ribbon {
    display: flex;
    flex: none;
    height: 92px;
    padding: 2px 0 3px;
    background: #d6dbe9;
    border-bottom: 1px solid #bec3d1;
    font-size: 11px;
}

.group {
    display: flex;
    flex-direction: column;
    flex: none;
    border-right: 1px solid #bec3d1;
}

.group h2 {
    margin-top: auto;
    font-size: 11px;
    font-weight: normal;
    line-height: 17px;
    text-align: center;
}

.cols {
    display: flex;
    height: 67px;
    padding: 1px 0 0 7px;
}

.cmd {
    display: flex;
    align-items: center;
    gap: 3px;
    height: 22px;
    padding: 0 3px;
    border: 1px solid transparent;
}

.cmd:disabled {
    color: #8e9097;
}

.cmd.selected {
    background: #fff29d;
    border-color: #0078d7;
}

.project { width: 133px; }
.clipboard { width: 119px; }
.clipboard .cols { padding-left: 5px; }
.ladder { width: 193px; }
.edit { width: 111px; }
.edit .cols { padding-left: 5px; }
.program { width: 94px; }
.program .cols { padding-left: 5px; }
.mode { width: 128px; }
.mode .cols { padding-left: 6px; }
.online { width: 406px; }
.online .cols { padding-left: 5px; }
.transfer { width: 116px; }
.only-icons { padding: 0 3px; border: solid #bec3d1; border-width: 0 1px; }
.device { width: 135px; padding-left: 3px; }
.tool { width: 159px; }
.tool .cols { padding-left: 5px; }
.backup { width: 126px; }

.ladder-grid {
    display: grid;
    grid-template-columns: repeat(7, 26px);
    grid-auto-rows: 22px;
    padding: 3px 0 0 4px;
}

.ladder-grid button {
    display: flex;
    flex-direction: column;
    align-items: center;
    gap: 2px;
    font: 9px/9px "Liberation Sans", sans-serif;
    color: #96989e;
}

.ladder-grid svg {
    width: 16px;
    height: 8px;
    flex: none;
    fill: none;
    stroke: #96989e;
}

/* workspace */
.workspace {
    display: flex;
    flex: 1;
    min-height: 0;
    gap: 6px;
}

.panel {
    display: flex;
    flex-direction: column;
    width: 209px;
    flex: none;
    background: #fff;
    border: solid #9a9a9a;
    border-width: 0 1px 1px;
}

.panel-title {
    display: flex;
    align-items: center;
    gap: 9px;
    height: 23px;
    margin: 0 -1px;
    padding: 0 6px 0 4px;
    background: #fff29d;
    color: #6b6535;
    font-size: 11px;
}

.panel-title span {
    flex: 1;
    color: #1b1b2f;
}

.panel-title .arrow {
    color: #75703f;
}

.tree {
    flex: 1;
    min-height: 0;
    overflow: hidden;
    border-top: 1px solid #9a9a9a;
    color: #000;
    white-space: nowrap;
}

.tree ul {
    padding-left: 19px;
}

.tree li {
    position: relative;
}

.tree li::before {
    content: "";
    position: absolute;
    left: 11px;
    top: 0;
    bottom: 0;
    border-left: 1px dotted #777;
}

.tree > li:first-child::before {
    top: 9px;
}

.tree li:last-child::before {
    bottom: auto;
    height: 9px;
}

.node {
    display: flex;
    align-items: center;
    height: 18px;
}

.node .icon {
    margin-right: 5px;
}

.joint {
    position: relative;
    display: flex;
    align-items: center;
    width: 22px;
    height: 18px;
    flex: none;
    padding-left: 7px;
}

.joint::after {
    content: "";
    flex: 1;
    border-top: 1px dotted #777;
}

.joint.leaf {
    padding-left: 12px;
}

.toggle {
    width: 9px;
    height: 9px;
    border: 1px solid #8a8a8a;
    border-radius: 1px;
    background: #fff;
    color: #2a3f8f;
    font: 9px/7px "DejaVu Sans", sans-serif;
}

.picked {
    margin-left: -2px;
    padding: 0 2px;
    background: #0078d7;
    color: #fff;
}

.panel-scroll {
    display: flex;
    align-items: center;
    height: 18px;
    padding: 0 5px;
    gap: 6px;
    background: #f0f0f0;
}

.chev {
    width: 6px;
    height: 8px;
    fill: none;
    stroke: #505050;
    stroke-width: 2;
}

.rail {
    flex: 1;
    height: 100%;
    display: flex;
    align-items: center;
}

.panel-scroll .thumb {
    width: 68%;
    height: 15px;
    background: #cdcdcd;
}

/* editor */
.editor {
    display: flex;
    flex: 1;
    flex-direction: column;
    min-width: 0;
}

.doc-tabs {
    display: flex;
    align-items: flex-end;
    justify-content: space-between;
    height: 20px;
    flex: none;
    padding-right: 4px;
}

.doc-tabs .arrow {
    margin-bottom: 6px;
}

.doc-tab {
    display: flex;
    justify-content: center;
    width: 146px;
    height: 17px;
    background: linear-gradient(#fff, #e9edf5);
    clip-path: polygon(18px 0, 100% 0, 100% 100%, 0 100%);
    font-size: 11px;
    font-weight: bold;
    line-height: 14px;
}

.toolbar {
    height: 25px;
    flex: none;
    padding: 2px 11px;
    background: #cfd6e5;
}

.tool-icon {
    width: 18px;
    height: 18px;
}

.vars {
    flex: none;
    padding: 1px 1px 0 2px;
    background: #d6dbe9;
    border: 1px solid #bec3d1;
    border-left: none;
}

.var-table {
    width: 100%;
    background: #fff;
    border-collapse: collapse;
    table-layout: fixed;
}

.c-no { width: 30px; }
.c-mid { width: 799px; }

.var-table th {
    height: 24px;
    padding-left: 5px;
    background: #f0f0f0;
    border: solid #8a93ab;
    border-width: 1px 0;
    font-size: 12px;
    font-weight: normal;
    text-align: left;
    color: #000;
}

.var-table th.corner {
    background: linear-gradient(135deg, transparent 50%, #9db9d6 50%) right 4px bottom 4px / 14px 14px no-repeat #f0f0f0;
}

.var-table tbody th {
    height: 20px;
    padding: 0;
    line-height: 16px;
    text-align: center;
}

.var-table td {
    background: #0078d7;
    border-left: 1px solid #fff;
}

.vars-blank {
    height: 38px;
    background: #fff;
}

.hscroll {
    display: flex;
    align-items: center;
    flex: none;
    height: 18px;
    padding: 0 6px;
    gap: 6px;
    background: #d6dbe9;
}

.hscroll .thumb {
    height: 9px;
    background: #bdc0c9;
}

.vars-thumb { width: 83%; }
.ladder-thumb { width: 81%; }

.ladder-view {
    display: flex;
    flex: 1;
    flex-direction: column;
    min-height: 0;
    margin-bottom: 6px;
    padding: 1px;
    background: #fff;
    border: solid #d6dbe9;
    border-width: 5px 1px 2px 2px;
    box-shadow: inset 0 0 0 1px #8a8a8a;
}

.rung {
    display: flex;
    flex: none;
    height: 87px;
    border-bottom: 1px solid #c8c8c8;
}

.gutter {
    display: flex;
    flex-direction: column;
    width: 21px;
    padding: 5px 0 0 5px;
    border-right: 1px solid #000;
}

.mark {
    width: 7px;
    height: 68px;
    margin: 6px 0 0 6px;
    background: #c0c0ff;
}

.rung-body {
    flex: 1;
}

.rung-head {
    height: 15px;
    background: #e8ecf5;
}

.blank {
    flex: 1;
}

.device-panel {
    height: 42px;
    flex: none;
    background: #4d6082;
    color: #fff;
    font-size: 11px;
}

.device-title {
    display: flex;
    align-items: center;
    gap: 9px;
    height: 23px;
    padding: 0 6px 0 4px;
    border-bottom: 1px solid #bec8dc;
}

.device-title span {
    flex: 1;
}

.device-body {
    display: flex;
    height: 19px;
    padding-left: 4px;
    gap: 2px;
    color: #cdd4e2;
}

.device-tab {
    align-self: flex-end;
    width: 113px;
    height: 4px;
    margin-left: 304px;
    background: #cfcfcf;
}

/* dialog window */
.dialog {
    position: absolute;
    left: 244px;
    top: 122px;
    width: 802px;
    height: 682px;
    display: flex;
    flex-direction: column;
    background: #e6e9f2;
    border: 1px solid #1c7fd0;
    box-shadow: 0 2px 14px rgba(0, 0, 0, 0.45);
}

.dialog-title {
    display: flex;
    align-items: center;
    justify-content: space-between;
    height: 30px;
    flex: none;
    padding: 0 9px 0 8px;
    background: #0078d7;
    color: #fff;
}

.dialog-title h1 {
    font-size: 13px;
    font-weight: normal;
    line-height: 18px;
}

.dialog-close,
.dialog-close svg {
    display: block;
    width: 12px;
    height: 12px;
}

.dialog-main {
    display: flex;
    flex: 1;
    min-height: 0;
    gap: 3px;
    padding: 11px 10px 0 11px;
}

.pages {
    width: 133px;
    flex: none;
    overflow: hidden;
    padding-top: 1px;
    background: #fff;
    border: 1px solid #bec3d1;
    color: #000;
    white-space: nowrap;
}

.pages li {
    height: 17px;
    margin: 0 1px;
    padding-left: 2px;
    line-height: 17px;
    overflow: hidden;
}

.pages .current {
    background: #0078d7;
    color: #fff;
}

.page {
    display: flex;
    flex: 1;
    flex-direction: column;
    padding: 20px 25px 42px 24px;
    border: 2px solid #cdd2e0;
}

.fields {
    display: flex;
    justify-content: space-between;
    padding-right: 5px;
}

.fields-left,
.fields-right {
    display: grid;
    align-items: center;
    align-content: start;
}

.fields-left {
    grid-template: 23px 25px / 76px 198px;
    row-gap: 7px;
}

.fields-right {
    grid-template: 25px 25px / 69px 198px;
    row-gap: 2px;
    padding-top: 3px;
}

.raised {
    align-self: start;
}

.fields input {
    width: 100%;
    height: 23px;
    padding: 0 4px;
    background: #e6e9f2;
    border: 1px solid #bec3d1;
}

.select {
    display: flex;
    min-width: 0;
    height: 25px;
    padding: 1px 1px 1px 3px;
    background: #fff;
    border: 1px solid #bec3d1;
    color: #000;
}

.select.off {
    border-color: #858585;
    color: #8a8a8a;
}

.select select {
    flex: 1;
    min-width: 0;
    appearance: none;
    background: none;
    border: none;
    opacity: 1;
    overflow: hidden;
    text-overflow: clip;
}

.drop {
    width: 17px;
    display: flex;
    align-items: center;
    justify-content: center;
    background: #cfd6e5;
}

.off .drop {
    background: none;
}

.drop::after {
    content: "";
    border: solid transparent;
    border-width: 3px 3px 0;
    border-top-color: #777;
}

.checks {
    display: flex;
    height: 39px;
    align-items: center;
}

.check {
    display: flex;
    align-items: center;
    gap: 3px;
    width: 190px;
}

.check input {
    appearance: none;
    width: 11px;
    height: 11px;
    background: #fff;
    border: 1px solid #777;
}

.check input:checked::before {
    content: "";
    display: block;
    width: 3px;
    height: 6px;
    margin-left: 3px;
    border: solid #333;
    border-width: 0 1px 1px 0;
    transform: rotate(42deg);
}

.check.off {
    color: #8a8d95;
}

.check.off input {
    border-color: #bec3d1;
}

.mapping {
    display: flex;
    flex: 1;
    min-height: 0;
    padding: 1px;
    background: #fff;
    border: 1px solid #bec3d1;
    color: #000;
}

.mapping-view {
    flex: 1;
    overflow: hidden;
}

.map {
    width: 100%;
    table-layout: fixed;
    border-collapse: separate;
    border-spacing: 0;
    white-space: nowrap;
}

.c-exp { width: 22px; }
.c-ind { width: 21px; }
.c-name { width: 237px; }
.c-end { width: 8px; }

.map th {
    height: 25px;
    background: linear-gradient(#bec3d1, #bec3d1) left center / 1px 14px no-repeat #f0f0f0;
    border: solid #8a93ab;
    border-width: 1px 0;
    padding-left: 5px;
    font-weight: normal;
    text-align: left;
}

.map th:first-child,
.map th.name {
    background: #f0f0f0;
}

.map th.name {
    padding-left: 4px;
}

.map td {
    height: 21px;
    padding-left: 1px;
    line-height: 20px;
    border-bottom: 1px solid #eeeeee;
}

.map td:first-child,
.map tr:not(.grp) td:nth-child(2) {
    border-bottom: none;
}

.map .grp td:nth-child(2) {
    padding-left: 3px;
}

.map td:last-child {
    padding-left: 4px;
    border-left: 1px solid #eeeeee;
    border-right: 1px solid #eeeeee;
}

.open {
    display: block;
    width: 6px;
    height: 6px;
    margin-left: 7px;
    background: #555;
    clip-path: polygon(100% 0, 100% 100%, 0 100%);
}

.vscroll {
    display: flex;
    flex-direction: column;
    align-items: center;
    width: 17px;
    gap: 5px;
    padding: 6px 0 5px;
    background: #d6dbe9;
}

.vrail {
    flex: 1;
}

.vthumb {
    width: 9px;
    height: 81%;
    background: #bdc0c9;
}

.dialog-footer {
    display: flex;
    flex: none;
    justify-content: flex-end;
    gap: 6px;
    padding: 5px 11px 11px;
}

.btn {
    width: 75px;
    height: 23px;
    background: #d6dbe9;
    border: 1px solid #8a93ab;
    line-height: 20px;
}

.btn.primary {
    border-color: #0f64ad;
}

.notes {
    position: absolute;
    left: 0;
    top: 0;
    pointer-events: none;
}

.notes .line {
    fill: none;
    stroke: #129a9c;
    stroke-width: 4;
}

.notes text {
    font: 18px "Liberation Sans", sans-serif;
    fill: #129a9c;
}
```
